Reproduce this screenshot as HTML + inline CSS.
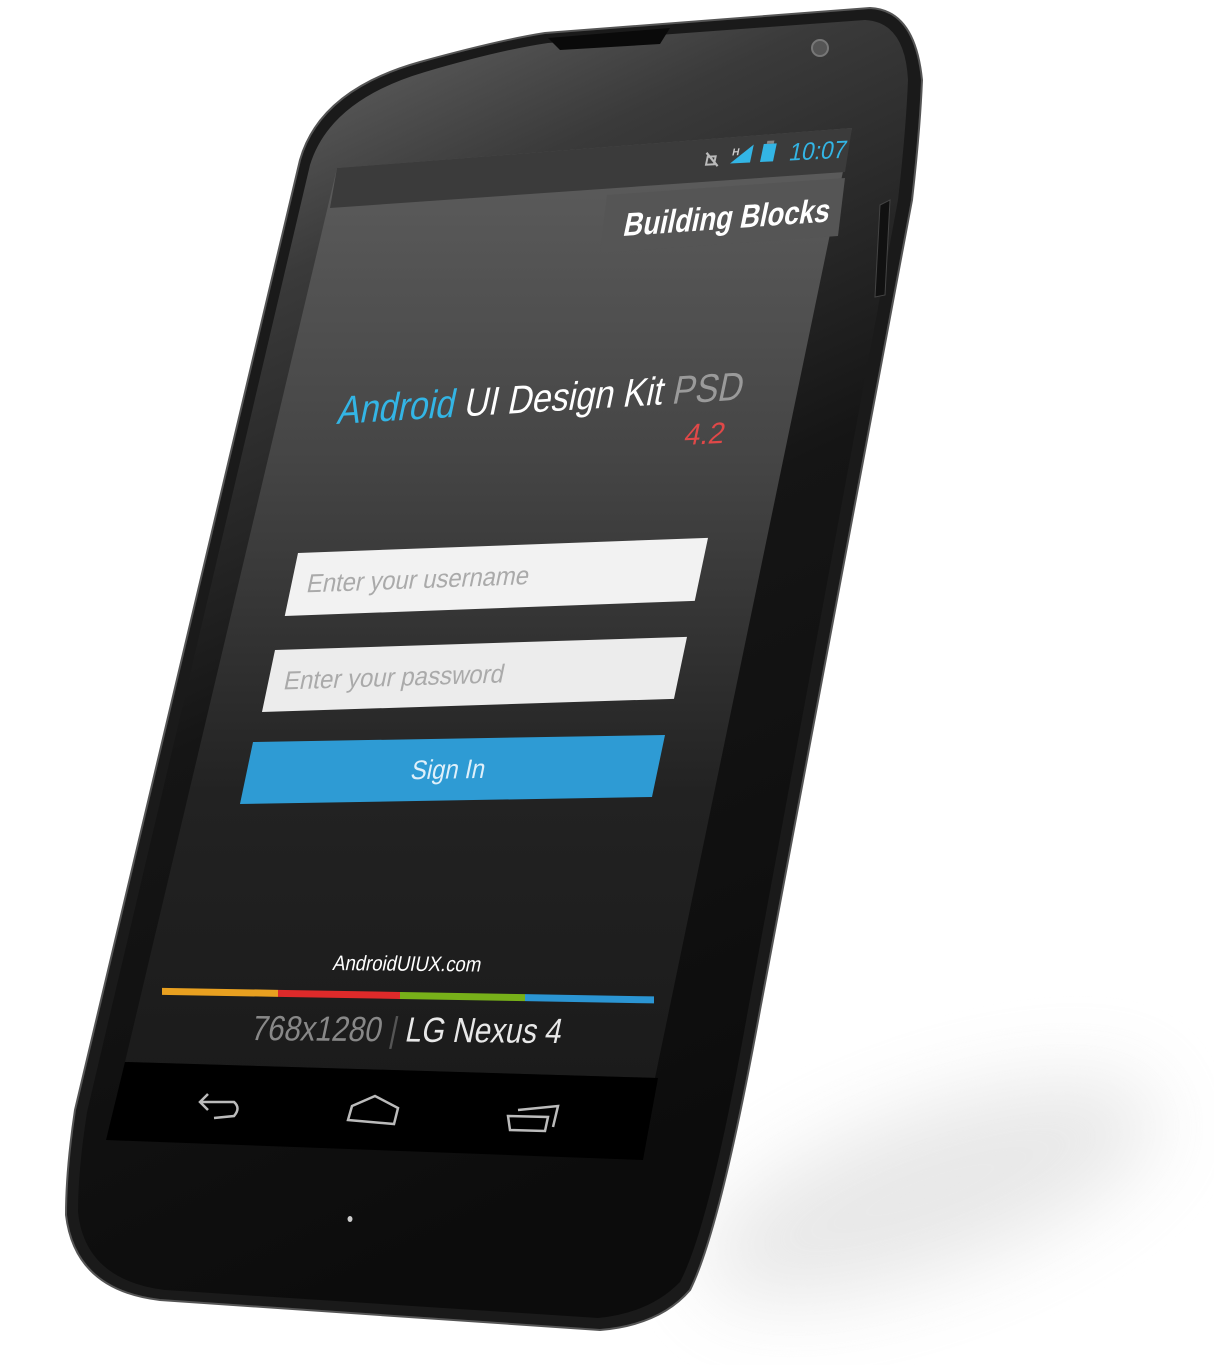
<!DOCTYPE html>
<html><head><meta charset="utf-8"><style>
html,body{margin:0;padding:0;background:#fff;width:1214px;height:1365px;overflow:hidden}
svg{display:block}
text{font-family:"Liberation Sans",sans-serif}
</style></head><body>
<svg width="1214" height="1365" viewBox="0 0 1214 1365" xmlns="http://www.w3.org/2000/svg">
<defs>
<filter id="blur" x="-50%" y="-50%" width="200%" height="200%"><feGaussianBlur stdDeviation="40"/></filter>
<linearGradient id="body" x1="0" y1="0" x2="0.3" y2="1">
<stop offset="0" stop-color="#777"/>
<stop offset="0.25" stop-color="#3a3a3a"/>
<stop offset="0.55" stop-color="#151515"/>
<stop offset="1" stop-color="#0c0c0c"/>
</linearGradient>
<linearGradient id="scr" x1="0" y1="0" x2="0" y2="1">
<stop offset="0" stop-color="#5e5e5e"/>
<stop offset="0.35" stop-color="#454545"/>
<stop offset="0.7" stop-color="#222"/>
<stop offset="1" stop-color="#1b1b1b"/>
</linearGradient>
</defs>
<ellipse cx="930" cy="1190" rx="240" ry="80" fill="#ccc" opacity="0.45" filter="url(#blur)" transform="rotate(-20 930 1190)"/>
<path d="M420,62 Q500,40 545,33 L870,8 Q915,10 922,80 Q920,130 912,200 L760,1010 Q720,1230 690,1290 Q660,1325 600,1330 L160,1300 Q75,1290 66,1215 Q66,1170 75,1110 L300,160 Q320,90 420,62 Z" fill="#1a1a1a" stroke="#555" stroke-width="2"/>
<path d="M425,72 Q500,50 548,43 L865,20 Q905,22 908,80 Q906,130 898,200 L748,1010 Q710,1225 680,1282 Q650,1313 598,1318 L165,1290 Q85,1280 78,1212 Q78,1170 87,1112 L310,165 Q330,100 425,72 Z" fill="url(#body)"/>
<path d="M548,38 L670,28 L660,44 L560,50 Z" fill="#0a0a0a"/>
<circle cx="820" cy="48" r="8" fill="#555" stroke="#777" stroke-width="2"/>
<path d="M890,200 L885,295 L875,297 L880,205 Z" fill="#111" stroke="#444"/>
<path d="M337,168 L852,128 L655,1078 L125,1062 Z" fill="url(#scr)"/>
<path d="M337,168 L852,128 L845,172 L330,208 Z" fill="#3b3b3b"/>
<path d="M607,195 L845,178 L838,236 L600,253 Z" fill="#555"/>
<text transform="translate(622,236) matrix(1,-0.07,-0.21,1,0,0)" font-size="33" font-weight="bold" fill="#fff" textLength="206" lengthAdjust="spacingAndGlyphs">Building Blocks</text>
<g transform="translate(700,165) matrix(1,-0.05,-0.21,1,0,0)">
<path d="M4,-12 L18,2 M6,-8 L14,-8 L14,0 L6,0 Z" stroke="#bbb" stroke-width="2" fill="none"/>
<text x="30" y="-8" font-size="10" font-weight="bold" fill="#ccc">H</text>
<path d="M30,0 L50,-18 L50,0 Z" fill="#33b5e5"/>
<rect x="60" y="-18" width="13" height="18" fill="#33b5e5"/>
<rect x="63" y="-21" width="7" height="3" fill="#888"/>
<text x="88" y="0" font-size="25" fill="#33b5e5" textLength="57" lengthAdjust="spacingAndGlyphs">10:07</text>
</g>
<text transform="translate(336,424) matrix(1,-0.06,-0.21,1,0,0)" font-size="40" fill="#fff" textLength="405" lengthAdjust="spacingAndGlyphs"><tspan fill="#33b5e5">Android</tspan> UI Design Kit <tspan fill="#9a9a9a">PSD</tspan></text>
<text transform="translate(683,445) matrix(1,-0.05,-0.21,1,0,0)" font-size="30" fill="#e04848" textLength="40" lengthAdjust="spacingAndGlyphs">4.2</text>
<g transform="translate(298,553) matrix(1,-0.037,-0.21,1,0,0)">
<rect width="410" height="63" fill="#f2f2f2"/>
<text x="16" y="40" font-size="26" fill="#aaa" textLength="222" lengthAdjust="spacingAndGlyphs">Enter your username</text>
</g>
<g transform="translate(275,650) matrix(1,-0.032,-0.21,1,0,0)">
<rect width="412" height="62" fill="#ececec"/>
<text x="16" y="40" font-size="26" fill="#aaa" textLength="220" lengthAdjust="spacingAndGlyphs">Enter your password</text>
</g>
<g transform="translate(253,742) matrix(1,-0.017,-0.21,1,0,0)">
<rect width="412" height="62" fill="#2e9bd4"/>
<text x="165" y="40" font-size="27" fill="#dff0fa" textLength="74" lengthAdjust="spacingAndGlyphs">Sign In</text>
</g>
<text transform="translate(332,970) matrix(1,0.01,-0.21,1,0,0)" font-size="21" fill="#fff" textLength="148" lengthAdjust="spacingAndGlyphs">AndroidUIUX.com</text>
<rect x="162" y="985" width="116" height="7" fill="#e8a020" transform="skewY(1)"/>
<rect x="278" y="985" width="122" height="7" fill="#dd2a2a" transform="skewY(1)"/>
<rect x="400" y="985" width="125" height="7" fill="#77b019" transform="skewY(1)"/>
<rect x="525" y="985" width="129" height="7" fill="#2b95d3" transform="skewY(1)"/>
<text transform="translate(250,1040) matrix(1,0.01,-0.21,1,0,0)" font-size="35" fill="#888" textLength="310" lengthAdjust="spacingAndGlyphs">768x1280 <tspan fill="#555">|</tspan> <tspan fill="#e8e8e8">LG Nexus 4</tspan></text>
<path d="M125,1062 L658,1078 L643,1160 L106,1140 Z" fill="#000"/>
<g stroke="#bbb" stroke-width="2.5" fill="none">
<path d="M208,1094 L200,1102 L208,1110 M200,1102 L234,1102 Q241,1108 234,1116 L214,1118"/>
<path d="M348,1120 L352,1106 L375,1096 L398,1108 L394,1124 Z"/>
<path d="M508,1116 L510,1130 L545,1131 L548,1117 Z M518,1110 L558,1106 L553,1127"/>
</g>
<ellipse cx="350" cy="1219" rx="2.5" ry="3" fill="#ccc"/>
</svg>
</body></html>
